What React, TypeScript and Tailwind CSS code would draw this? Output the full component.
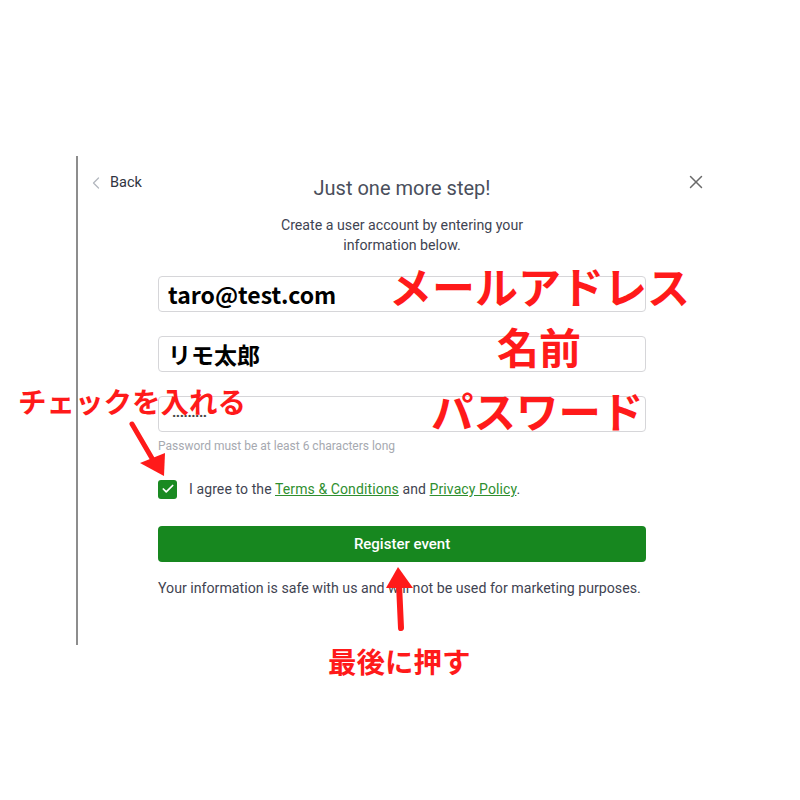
import { Check, ChevronLeft, X } from "lucide-react";

const note = "absolute font-bold leading-none text-[#ff1a1a] [font-family:'Noto_Sans_CJK_JP',sans-serif]";

function Field({ children }: { children: React.ReactNode }) {
  return (
    <div className="flex h-9 items-center rounded border border-[#d6d6d9] bg-white pl-[9px]">{children}</div>
  );
}

export default function App() {
  return (
    <div className="relative h-[800px] w-[800px] overflow-hidden bg-white pt-[156px] text-[#3c4150] [font-family:Roboto,'Noto_Sans_CJK_JP',sans-serif]">
      <div className="ml-[76px] h-[489px] w-[650px] border-l-2 border-[#8d8d8d]">
        <div className="grid grid-cols-[1fr_auto_1fr] items-start pt-[17px]">
          <button className="flex items-center gap-[4px] justify-self-start pl-[8px] text-[14.5px] leading-5 text-[#2f3441]">
            <ChevronLeft className="h-5 w-5 text-[#b3b7bf]" strokeWidth={1.5} />
            Back
          </button>
          <h1 className="mt-[1px] text-[20px] leading-7 text-[#4a4f5c]">Just one more step!</h1>
          <button className="-mt-[2px] mr-[19px] justify-self-end text-[#6a6a6a]">
            <X className="h-[22px] w-[22px]" strokeWidth={1.6} />
          </button>
        </div>
        <p className="mt-[13px] text-center text-[14.2px] leading-5 text-[#3f4452]">
          Create a user account by entering your
          <br />
          information below.
        </p>

        <div className="px-[80px]">
          <div className="mt-[21px] flex flex-col gap-6">
            <Field>
              <span className="text-[23px] font-bold text-black [font-family:'Noto_Sans_CJK_JP',sans-serif]">taro@test.com</span>
            </Field>
            <Field>
              <span className="text-[23px] font-bold text-black [font-family:'Noto_Sans_CJK_JP',sans-serif]">リモ太郎</span>
            </Field>
            <Field>
              <span className="-mt-[4px] pl-[4px] text-[15px] font-bold tracking-[-0.5px] text-[#444]">.........</span>
            </Field>
          </div>
          <p className="mt-[6px] text-xs leading-4 text-[#a6a9b0]">Password must be at least 6 characters long</p>

          <label className="mt-[25px] flex items-center gap-3 text-sm leading-5 text-[#3f4452]">
            <span className="flex h-[19px] w-[19px] items-center justify-center rounded-[3px] bg-[#1a8a22]">
              <Check className="h-[14px] w-[14px] text-white" strokeWidth={3} />
            </span>
            <span className="tracking-[0.1px]">
              I agree to the <a className="text-[#2f8f2f] underline">Terms &amp; Conditions</a> and{" "}
              <a className="text-[#2f8f2f] underline">Privacy Policy</a>.
            </span>
          </label>

          <button className="mt-[27px] h-9 w-full rounded bg-[#17871f] text-[15px] font-medium text-white">Register event</button>

          <p className="mt-4 text-[14.2px] leading-5 text-[#3f4452]">
            Your information is safe with us and will not be used for marketing purposes.
          </p>
        </div>
      </div>

      <span className={`${note} left-[389px] top-[264px] text-[43px]`}>メールアドレス</span>
      <span className={`${note} left-[497px] top-[325px] text-[42px]`}>名前</span>
      <span className={`${note} left-[431px] top-[389px] text-[42.5px]`}>パスワード</span>
      <span className={`${note} left-[18px] top-[387px] text-[28.5px]`}>チェックを入れる</span>
      <span className={`${note} left-[328px] top-[647px] text-[28.5px]`}>最後に押す</span>

      <svg className="pointer-events-none absolute left-0 top-0" width="800" height="800">
        <line x1="132" y1="424" x2="153" y2="460" stroke="#ff1a1a" strokeWidth="5" strokeLinecap="round" />
        <polygon points="140,463 165,453 164,476" fill="#ff1a1a" />
        <line x1="399" y1="584" x2="401" y2="628" stroke="#ff1a1a" strokeWidth="6" strokeLinecap="round" />
        <polygon points="386,588 413,588 398,567" fill="#ff1a1a" />
      </svg>
    </div>
  );
}
